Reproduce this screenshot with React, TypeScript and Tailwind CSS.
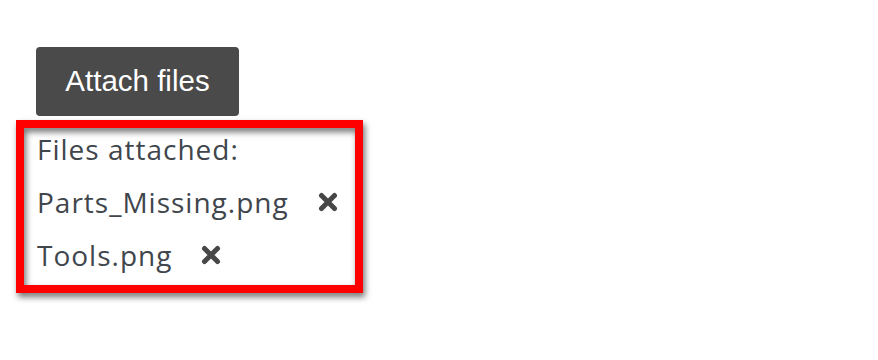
import React from 'react';

const files = ['Parts_Missing.png', 'Tools.png'];

function TimesIcon() {
  return (
    <svg width="20" height="20" viewBox="0 0 20 20" aria-hidden="true">
      <path d="M3.5 3.5L16.5 16.5M16.5 3.5L3.5 16.5" stroke="#474747" strokeWidth="5" strokeLinecap="round" fill="none" />
    </svg>
  );
}

export default function App() {
  return (
    <div className="min-h-screen w-full bg-white" style={{ fontFamily: '"Open Sans", sans-serif' }}>
      <div className="pt-[47px] pl-[16px]">
        {/* Attach button */}
        <div className="pl-[20px]">
          <button
            className="h-[69px] w-[203px] rounded-[4px] bg-[#4a4a4a] text-[29.5px] text-white"
            style={{ fontFamily: '"Liberation Sans", Arial, sans-serif' }}
          >
            Attach files
          </button>
        </div>

        {/* Attached list with red annotation frame */}
        <div className="relative mt-[4px] h-[173px] w-[347px] p-[8px]">
          <div className="absolute inset-0 border-[8px] border-[#ff0000] drop-shadow-[2px_4px_3px_rgba(0,0,0,0.55)]" />
          <div className="flex flex-col gap-[13px] pl-[13px] pt-[1px] text-[28px] tracking-[1px] text-[#40464c]">
            <div className="h-10 leading-10">Files attached:</div>
            {files.map((f) => (
              <div key={f} className="flex h-10 items-center gap-[29px] leading-10">
                <span>{f}</span>
                <TimesIcon />
              </div>
            ))}
          </div>
        </div>
      </div>
    </div>
  );
}
